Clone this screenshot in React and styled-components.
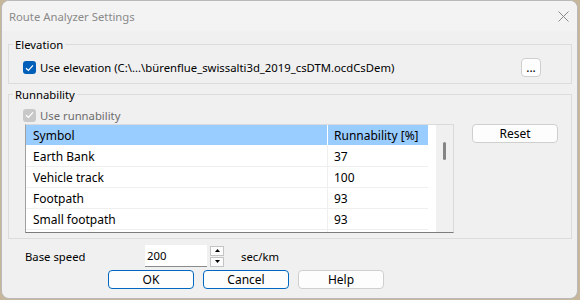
import React from 'react'
import styled, { createGlobalStyle } from 'styled-components'

const GlobalStyle = createGlobalStyle`
    html, body {
        margin: 0;
        padding: 0;
        background: #c6b69c;
    }
    body {
        font-family: "Noto Sans", "Liberation Sans", sans-serif;
        font-size: 11.3px;
        color: #000;
    }
`

const Desk = styled.div`
    width: 580px;
    height: 300px;
    padding-left: 1px;
    box-sizing: border-box;
`
const Window = styled.div`
    width: 577px;
    height: 299px;
    box-sizing: border-box;
    background: #f0f0f0;
    border: 1px solid #b9b9b9;
    border-radius: 8px;
    overflow: hidden;
    display: flex;
    flex-direction: column;
`
const TitleBar = styled.div`
    height: 30px;
    flex-shrink: 0;
    background: #f3f3f3;
    display: flex;
    align-items: center;
    justify-content: space-between;
    padding: 0 8px 0 7px;
`
const Title = styled.span`
    color: #8a8a8a;
`
const Content = styled.div`
    padding: 4px 5px 0 6px;
    display: flex;
    flex-direction: column;
`
const Group = styled.fieldset`
    margin: ${p => p.$top || 0}px 0 0 0;
    padding: 0;
    border: 1px solid #dcdcdc;
    min-width: 0;
`
const Legend = styled.legend`
    margin-left: 4px;
    padding: 0 2px;
    line-height: 16px;
    padding-top: 2px;
`
const ElevationRow = styled.div`
    display: flex;
    align-items: center;
    justify-content: space-between;
    padding: 5px 30px 6px 14px;
`
const CheckLabel = styled.label`
    display: flex;
    align-items: center;
    gap: 4px;
    height: 16px;
    color: ${p => (p.$disabled ? '#6d6d6d' : '#000')};
`
const Box = styled.span`
    width: 13px;
    height: 13px;
    box-sizing: border-box;
    border-radius: 3px;
    background: ${p => (p.$disabled ? '#c8c8c8' : '#005fb8')};
    display: flex;
    align-items: center;
    justify-content: center;
`
const Button = styled.button`
    font: inherit;
    font-size: 12px;
    color: #000;
    height: 19px;
    width: ${p => p.$w || 86}px;
    padding: 0;
    box-sizing: border-box;
    background: #fdfdfd;
    border: 1px solid ${p => (p.$accent ? '#0067c0' : '#cfcfcf')};
    border-radius: 4px;
    display: flex;
    align-items: center;
    justify-content: center;
    line-height: 1;
`
const RunBody = styled.div`
    padding: 4px 0 5px 14px;
    display: flex;
    flex-direction: column;
    gap: 1px;
`
const TableRow = styled.div`
    display: flex;
    align-items: flex-start;
    gap: 18px;
    padding-left: 2px;
`
const Table = styled.div`
    width: 429px;
    height: 109px;
    box-sizing: border-box;
    border: 1px solid #dadada;
    border-left-color: #a0a0a0;
    border-bottom-color: #7c7c7c;
    background: #fff;
    display: flex;
    overflow: hidden;
`
const Rows = styled.div`
    width: 402px;
    display: flex;
    flex-direction: column;
`
const Cells = styled.div`
    display: grid;
    grid-template-columns: 301px 101px;
    height: 21px;
    flex-shrink: 0;
    box-sizing: border-box;
    border-bottom: 1px solid ${p => (p.$head ? '#fff' : '#efefef')};
    background: ${p => (p.$head ? '#99ccff' : '#fff')};
`
const Cell = styled.div`
    display: flex;
    align-items: center;
    font-size: 12px;
    padding-left: ${p => (p.$second ? 6 : 7)}px;
    border-left: ${p => (p.$second ? `1px solid ${p.$head ? '#fff' : '#efefef'}` : 'none')};
`
const Gap = styled.div`
    width: 8px;
`
const Track = styled.div`
    width: 17px;
    background: #f0f0f0;
    padding: 17px 0 0 7px;
    box-sizing: border-box;
`
const Thumb = styled.div`
    width: 3px;
    height: 18px;
    border-radius: 2px;
    background: #858585;
`
const SpeedRow = styled.div`
    display: flex;
    align-items: center;
    margin-top: 6px;
    padding-left: 17px;
    height: 22px;
`
const SpeedLabel = styled.span`
    width: 120px;
`
const Input = styled.div`
    width: 62px;
    height: 22px;
    box-sizing: border-box;
    background: #fff;
    border-bottom: 1px solid #8a8a8a;
    padding-left: 2px;
    display: flex;
    align-items: center;
`
const Spin = styled.div`
    display: flex;
    flex-direction: column;
    gap: 1px;
    margin-left: 3px;
`
const SpinBtn = styled.div`
    width: 14px;
    height: 10px;
    box-sizing: border-box;
    border: 1px solid #c4c4c4;
    background: #fbfbfb;
    display: flex;
    align-items: center;
    justify-content: center;
`
const Unit = styled.span`
    margin-left: 17px;
`
const Buttons = styled.div`
    display: flex;
    gap: 9px;
    margin-top: 3px;
    padding-left: 100px;
`

const Check = () => (
    <svg width="9" height="8" viewBox="0 0 9 8">
        <path d="M1 4.2 L3.4 6.5 L8 1.3" fill="none" stroke="#fff" strokeWidth="1.2"/>
    </svg>
)

const rows = [
    ['Earth Bank', '37'],
    ['Vehicle track', '100'],
    ['Footpath', '93'],
    ['Small footpath', '93'],
    ['', ''],
]

const App = () => {
    return (
        <Desk>
            <GlobalStyle/>
            <Window>
                <TitleBar>
                    <Title>Route Analyzer Settings</Title>
                    <svg width="11" height="11" viewBox="0 0 11 11">
                        <path d="M0.5 0.5 L10.5 10.5 M10.5 0.5 L0.5 10.5" stroke="#8a8a8a" strokeWidth="1"/>
                    </svg>
                </TitleBar>
                <Content>
                    <Group>
                        <Legend>Elevation</Legend>
                        <ElevationRow>
                            <CheckLabel>
                                <Box><Check/></Box>
                                Use elevation (C:\...\bürenflue_swissalti3d_2019_csDTM.ocdCsDem)
                            </CheckLabel>
                            <Button $w={20}>...</Button>
                        </ElevationRow>
                    </Group>
                    <Group $top={1}>
                        <Legend>Runnability</Legend>
                        <RunBody>
                            <CheckLabel $disabled>
                                <Box $disabled><Check/></Box>
                                Use runnability
                            </CheckLabel>
                            <TableRow>
                                <Table>
                                    <Rows>
                                        <Cells $head>
                                            <Cell>Symbol</Cell>
                                            <Cell $second $head>Runnability [%]</Cell>
                                        </Cells>
                                        {rows.map(([name, val], i) => (
                                            <Cells key={i}>
                                                <Cell>{name}</Cell>
                                                <Cell $second>{val}</Cell>
                                            </Cells>
                                        ))}
                                    </Rows>
                                    <Gap/>
                                    <Track><Thumb/></Track>
                                </Table>
                                <Button>Reset</Button>
                            </TableRow>
                        </RunBody>
                    </Group>
                    <SpeedRow>
                        <SpeedLabel>Base speed</SpeedLabel>
                        <Input>200</Input>
                        <Spin>
                            <SpinBtn>
                                <svg width="5" height="3" viewBox="0 0 5 3"><path d="M0 3 L2.5 0 L5 3 Z" fill="#000"/></svg>
                            </SpinBtn>
                            <SpinBtn>
                                <svg width="5" height="3" viewBox="0 0 5 3"><path d="M0 0 L2.5 3 L5 0 Z" fill="#000"/></svg>
                            </SpinBtn>
                        </Spin>
                        <Unit>sec/km</Unit>
                    </SpeedRow>
                    <Buttons>
                        <Button $accent>OK</Button>
                        <Button $accent>Cancel</Button>
                        <Button>Help</Button>
                    </Buttons>
                </Content>
            </Window>
        </Desk>
    )
}

export default App
